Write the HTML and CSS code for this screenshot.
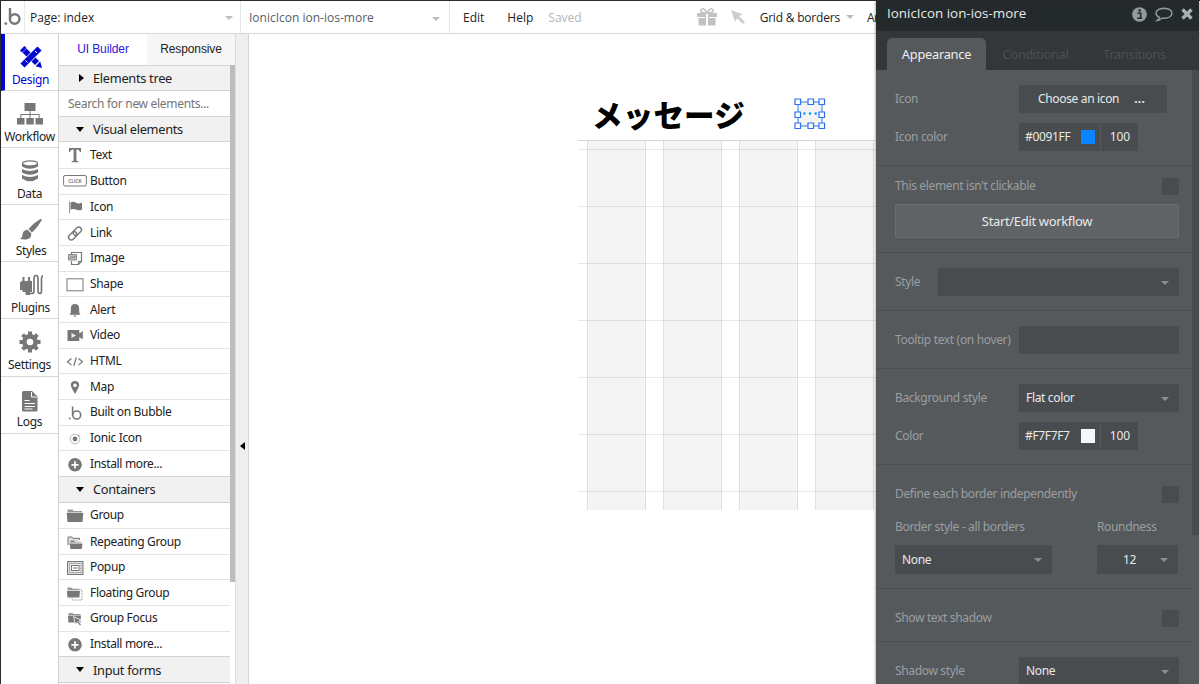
FILE: index.html
```html
<!DOCTYPE html>
<html>
<head>
    <meta charset="utf-8">
    <title>Page: index</title>
    <link rel="stylesheet" href="styles.css">
</head>
<body>
<div class="topbar">
    <div class="logo">
        <svg width="18" height="20" viewBox="0 0 18 20"><circle cx="1.8" cy="16.6" r="1.4" fill="#777"/><path d="M6 1v11" stroke="#777" stroke-width="2.4" fill="none"/><circle cx="10.7" cy="12" r="4.8" stroke="#777" stroke-width="2.4" fill="none"/></svg>
    </div>
    <div class="dropdown page_select">Page: index<i class="caret"></i></div>
    <div class="dropdown element_select">IonicIcon ion-ios-more<i class="caret"></i></div>
    <span class="menu edit">Edit</span>
    <span class="menu help">Help</span>
    <span class="menu saved">Saved</span>
    <svg class="gift" width="20" height="18" viewBox="0 0 20 18"><path d="M0 5h8v4H0zM12 5h8v4h-8zM1.500 10H8v7.500H2.500q-1 0-1-1zM12 10h6.500v6.500q0 1-1 1H12z" fill="#c2c2c2"/><path d="M8 5.500h1v12H8zM11 5.500h1v12h-1z" fill="#c2c2c2"/><path d="M10 5Q3 5 3.800 2.300 5.500-.8 8.500 2.500L10 5l1.500-2.500Q14.500-.8 16.200 2.300 17 5 10 5" fill="none" stroke="#c2c2c2" stroke-width="1.600"/></svg>
    <svg class="arrow" width="14" height="14" viewBox="0 0 14 14"><path d="M0 0l11.500 4.300-3.400 2L14 12 12 14 6.200 8.200 4 11.500z" fill="#ccc"/></svg>
    <span class="menu grid_menu">Grid &amp; borders<i class="caret"></i></span>
    <span class="menu arrange">Ar</span>
</div>

<div class="main">
<div class="nav">
    <div class="nav_item active">
        <svg width="22" height="22" viewBox="0 0 22 22"><path d="M4.500 4.500L17 17" stroke="#0205d3" stroke-width="5.600"/><path d="M22 22l-6.500-1.800 4.700-4.700z" fill="#0205d3"/><path d="M1 5.500L5.500 1" stroke="#0205d3" stroke-width="3"/><path d="M2.500 19.500L19.500 2.500" stroke="#fff" stroke-width="7"/><path d="M2.500 19.500L19.500 2.500" stroke="#0205d3" stroke-width="5.800"/><path d="M5.500 14.500l2 2M15 5l2 2" stroke="#fff" stroke-width="1"/></svg>
        <span>Design</span>
    </div>
    <div class="nav_item">
        <svg width="26" height="22" viewBox="0 0 26 22" fill="#777"><path d="M7.500 0h11v8h-11zM0 15h7.500v6.500H0zM9.300 15h7.500v6.500H9.300zM18.500 15H26v6.500h-7.500z"/><path d="M13 8v7M3.800 15v-3.500h18.400V15" fill="none" stroke="#777"/></svg>
        <span>Workflow</span>
    </div>
    <div class="nav_item">
        <svg width="18" height="22" viewBox="0 0 18 22" fill="#777"><path d="M1 3.500v3Q9 11 17 6.500v-3Q9 8 1 3.500zM1 9v3.500q8 4.500 16 0V9q-8 4-16 0zM1 15v3.500q8 5.500 16 0V15q-8 4-16 0z"/><ellipse cx="9" cy="3.500" rx="7.500" ry="2.600" fill="none" stroke="#777" stroke-width="1.300"/></svg>
        <span>Data</span>
    </div>
    <div class="nav_item styles">
        <svg width="22" height="22" viewBox="0 0 22 22" fill="#777"><path d="M20 1.200q2-.9 1.700 1-3.500 6.500-9.700 12.300L8.500 11Q13.500 5 20 1.200zM7.600 11.700l3.700 3.700q.2 5.300-5.300 6-3.500.4-6-.7 2.300-.7 2.500-4.400.5-4.300 5.100-4.600z"/></svg>
        <span>Styles</span>
    </div>
    <div class="nav_item plugins">
        <svg width="24" height="22" viewBox="0 0 24 22" fill="#777"><path d="M3.500 3h2v4h3.500V3h2v4h2v11h-2v3H6.500v-3H3.500v-2H1V9q0-2 2.500-2z"/><path d="M10.500 19.500h2q2.500 0 2.500-2V4.500Q15 1.500 17 1.500t2 3v12q0 3 1.800 3t1.700-3V4.500Q22.500 2 24 1.500" fill="none" stroke="#777" stroke-width="1.700"/></svg>
        <span>Plugins</span>
    </div>
    <div class="nav_item">
        <svg width="22" height="22" viewBox="0 0 22 22"><circle cx="11" cy="11" r="5.600" fill="none" stroke="#777" stroke-width="4.600"/><path d="M11 .5v4M11 17.500v4M.5 11h4M17.500 11h4M3.600 3.600l2.800 2.800M15.600 15.600l2.800 2.800M18.400 3.600l-2.800 2.800M6.400 15.600l-2.800 2.800" stroke="#777" stroke-width="4"/></svg>
        <span>Settings</span>
    </div>
    <div class="nav_item logs">
        <svg width="18" height="22" viewBox="0 0 18 22"><path d="M2.500 1H11l5.500 5.500V20q0 1.500-1.500 1.500H2.500Q1 21.500 1 20V2.500Q1 1 2.500 1z" fill="#777"/><path d="M10.500 2v5H16M3.500 10.500h5M3.500 13.500H14M3.500 16.500H14M3.500 19h8" fill="none" stroke="#fff" stroke-width="1"/></svg>
        <span>Logs</span>
    </div>
</div>

<div class="palette">
    <div class="tabs">
        <div class="tab current">UI Builder</div>
        <div class="tab">Responsive</div>
    </div>
    <div class="list">
        <div class="section closed"><i></i>Elements tree</div>
        <div class="search">Search for new elements...</div>
        <div class="section"><i></i>Visual elements</div>
        <div class="item"><svg viewBox="0 0 24 18"><path d="M6 2h12v4h-1q-.5-2.500-3-2.500h-.6V14q0 1.300 2 1.300v.9H8.600v-.9q2 0 2-1.300V3.500H10Q7.500 3.500 7 6H6z" fill="#777"/></svg>Text</div>
        <div class="item"><svg viewBox="0 0 24 18"><rect x=".6" y="3.500" width="22.800" height="10.500" rx="1.500" fill="none" stroke="#777"/><text x="12" y="10.800" class="click">CLICK</text></svg>Button</div>
        <div class="item"><svg viewBox="0 0 24 18"><path d="M6.500 3.500v12" stroke="#999"/><path d="M7.500 4.500q3-1.500 5.500.2t6-.3v7q-3.300 1.700-6 .2t-5.500.2z" fill="#777"/></svg>Icon</div>
        <div class="item"><svg viewBox="0 0 24 18"><g transform="rotate(-45 12 9.500)" fill="none" stroke="#777" stroke-width="1.400"><rect x="4" y="6.800" width="9.500" height="5.400" rx="2.700"/><rect x="10.500" y="6.800" width="9.500" height="5.400" rx="2.700"/></g></svg>Link</div>
        <div class="item"><svg viewBox="0 0 24 18"><path d="M8.500 5V3.500h10v9l-3 3h-7V12M15.500 15.500v-3h3" fill="none" stroke="#777" stroke-width="1.200"/><path d="M5.500 5.500h8v5.500h-8z" fill="#bbb" stroke="#888"/><path d="M7 9.500l2-2 1.500 1.500L12 7" stroke="#777" fill="none"/></svg>Image</div>
        <div class="item"><svg viewBox="0 0 24 18"><rect x="4" y="3.800" width="16" height="12" fill="none" stroke="#777" stroke-width="1"/></svg>Shape</div>
        <div class="item"><svg viewBox="0 0 24 18"><path d="M12 3q4.200 0 4.200 5v3.500l1.300 2.300h-11l1.300-2.300V8q0-5 4.200-5zM10.300 14.500h3.400q-1.700 2.600-3.400 0z" fill="#777"/></svg>Alert</div>
        <div class="item"><svg viewBox="0 0 24 18"><path d="M4.500 4h11.800v3.500L19.800 5v8.500l-3.500-2.500v4H4.500z" fill="#777"/><path d="M8.500 7l4.500 2.500L8.500 12z" fill="#eee"/></svg>Video</div>
        <div class="item"><svg viewBox="0 0 24 18"><path d="M8.500 6.500l-4 3.300 4 3.300M15.500 6.500l4 3.300-4 3.300M13.300 5.500l-2.600 8.500" fill="none" stroke="#777" stroke-width="1.200"/></svg>HTML</div>
        <div class="item"><svg viewBox="0 0 24 18"><path d="M12 3q4 0 4.200 4 0 2-4.200 9Q7.800 9 7.800 7 8 3 12 3zm0 2.500a1.800 1.800 0 1 0 .01 0z" fill="#777"/></svg>Map</div>
        <div class="item"><svg viewBox="0 0 24 18"><circle cx="6.800" cy="15.500" r=".9" fill="#777"/><path d="M9.600 3.500v8.500" stroke="#777" stroke-width="1.600"/><circle cx="13.700" cy="12" r="4" fill="none" stroke="#777" stroke-width="1.600"/></svg>Built on Bubble</div>
        <div class="item"><svg viewBox="0 0 24 18"><circle cx="12" cy="10" r="4.800" fill="none" stroke="#aaa" stroke-width=".8"/><circle cx="12" cy="10" r="2.400" fill="#777"/><circle cx="15.700" cy="6.500" r=".8" fill="#777"/></svg>Ionic Icon</div>
        <div class="item"><svg viewBox="0 0 24 18"><circle cx="12" cy="9.800" r="6.800" fill="#777"/><path d="M12 6.200v7.200M8.400 9.800h7.200" stroke="#fff" stroke-width="1.700"/></svg>Install more...</div>
        <div class="section"><i></i>Containers</div>
        <div class="item"><svg viewBox="0 0 24 18"><path d="M4.500 6.500V3.500h5l1 1.500h8.500v1.500z" fill="#999"/><path d="M3.700 7h16.600l-.8 9h-15z" fill="#777"/></svg>Group</div>
        <div class="item"><svg viewBox="0 0 24 18"><path d="M5 12V4h4l1 1.300h6.500V7" fill="#ddd" stroke="#777"/><path d="M7.500 9.500V7.500H11l1 1.200h6v.8z" fill="#888"/><path d="M6.500 10.500h13l-.8 5.500H7.500z" fill="#777"/></svg>Repeating Group</div>
        <div class="item"><svg viewBox="0 0 24 18"><rect x="4.500" y="3.500" width="15.500" height="13" fill="#ddd" stroke="#777"/><rect x="6.500" y="5.500" width="11.500" height="9" fill="#eee" stroke="#888" stroke-dasharray="1 .6"/><rect x="8.500" y="7.500" width="7.500" height="5" fill="#fff" stroke="#777"/><path d="M10 10h4.500" stroke="#777"/></svg>Popup</div>
        <div class="item"><svg viewBox="0 0 24 18"><path d="M4.500 6V3.500h4l1 1.200h7V6z" fill="#999"/><path d="M4 6.800h13l-.6 6.700h-12z" fill="#777"/><path d="M17.500 6h1.500v10H9V14" fill="none" stroke="#999" stroke-dasharray="1.500 1"/></svg>Floating Group</div>
        <div class="item"><svg viewBox="0 0 24 18"><path d="M5.500 6V4h4l1 1h7v1z" fill="#999"/><path d="M5 6.500h13l-.5 7h-12z" fill="#777"/><path d="M10.500 7.500l8 3.700-2.800 1 2.500 3.300-1.400 1.500-2.500-3.500-1.800 2z" fill="#777" stroke="#fff" stroke-width=".8"/></svg>Group Focus</div>
        <div class="item"><svg viewBox="0 0 24 18"><circle cx="12" cy="9.800" r="6.800" fill="#777"/><path d="M12 6.200v7.200M8.400 9.800h7.200" stroke="#fff" stroke-width="1.700"/></svg>Install more...</div>
        <div class="section"><i></i>Input forms</div>
    </div>
</div>

<div class="gutter"><i></i></div>

<div class="canvas">
    <div class="page_head">
        <h1>メッセージ</h1>
        <div class="selection">
            <svg width="32" height="32" viewBox="0 0 32 32"><rect x="4" y="4" width="24" height="24" rx="3" fill="#f4f4f4"/><path d="M4 4h24v24H4z" fill="none" stroke="#2f7cf0"/><g fill="#0091ff"><circle cx="10.300" cy="15.500" r="1.200"/><circle cx="16" cy="15.500" r="1.200"/><circle cx="21.700" cy="15.500" r="1.200"/></g><g fill="#fff" stroke="#2d6df0" stroke-width="1.200"><path d="M1 1h5.500v5.500H1zM14 1h5.500v5.500H14zM25 1h5.500v5.500H25zM1 14h5.500v5.500H1zM25 14h5.500v5.500H25zM1 25h5.500v5.500H1zM14 25h5.500v5.500H14zM25 25h5.500v5.500H25z"/></g></svg>
        </div>
    </div>
    <div class="page_grid">
        <div class="col"></div><div class="col"></div><div class="col"></div><div class="col"></div>
    </div>
</div>

<div class="editor">
    <div class="editor_title">
        <span>IonicIcon ion-ios-more</span>
        <svg width="15" height="15" viewBox="0 0 15 15"><circle cx="7.500" cy="7.500" r="7.300" fill="#949b9e"/><path d="M5.500 6.200h3.200v5M5.200 11.300h5" fill="none" stroke="#24292b" stroke-width="1.600"/><circle cx="7.700" cy="3.500" r="1.300" fill="#24292b"/></svg>
        <svg width="18" height="15" viewBox="0 0 18 15"><path d="M4.500 10.300Q1 9 1 6.200 1.500 1.500 9 1.200q7.500.3 8 5Q16.500 11 9 11.200l-2-.1q-2 2.200-5 2.500 2.200-1.600 2.500-3.300z" fill="none" stroke="#949b9e" stroke-width="1.400"/></svg>
        <svg width="12" height="12" viewBox="0 0 12 12"><path d="M1.500 1.500l9 9M10.500 1.500l-9 9" stroke="#aab0b2" stroke-width="3.400"/></svg>
    </div>
    <div class="editor_tabs">
        <div class="etab on">Appearance</div>
        <div class="etab">Conditional</div>
        <div class="etab">Transitions</div>
    </div>
    <div class="props">
        <div class="group">
            <div class="row"><label>Icon</label><div class="field choose">Choose an icon<b>...</b></div></div>
            <div class="row"><label>Icon color</label><div class="field color">#0091FF<i class="swatch blue"></i></div><div class="field alpha">100</div></div>
        </div>
        <div class="group clickable">
            <div class="check_row"><label>This element isn't clickable</label><i class="check"></i></div>
            <div class="workflow_btn">Start/Edit workflow</div>
        </div>
        <div class="group">
            <div class="row"><label class="short">Style</label><div class="field wide"><i class="caret"></i></div></div>
        </div>
        <div class="group">
            <div class="row"><label>Tooltip text (on hover)</label><div class="field wide"></div></div>
        </div>
        <div class="group">
            <div class="row"><label>Background style</label><div class="field wide">Flat color<i class="caret"></i></div></div>
            <div class="row"><label>Color</label><div class="field color">#F7F7F7<i class="swatch"></i></div><div class="field alpha">100</div></div>
        </div>
        <div class="group borders">
            <div class="check_row"><label>Define each border independently</label><i class="check"></i></div>
            <div class="pair">
                <div class="border_style"><label>Border style - all borders</label><div class="field">None<i class="caret"></i></div></div>
                <div class="roundness"><label>Roundness</label><div class="field">12<i class="caret"></i></div></div>
            </div>
        </div>
        <div class="group text_shadow">
            <div class="check_row"><label>Show text shadow</label><i class="check"></i></div>
        </div>
        <div class="group">
            <div class="row"><label>Shadow style</label><div class="field wide">None<i class="caret"></i></div></div>
        </div>
    </div>
</div>
</div>
</body>
</html>
```
FILE: styles.css
```css
* {
    box-sizing:border-box;
}

body {
    margin:0;
    width:1200px;
    height:684px;
    overflow:hidden;
    border-top:1px solid #2b2a2d;
    border-left:1px solid #2b2a2d;
    background:#fff;
    font-family:"Noto Sans", "Open Sans", sans-serif;
    font-size:12px;
    letter-spacing:-.34px;
    color:#222;
    position:relative;
}

.caret {
    width:0;
    height:0;
    border:4px solid transparent;
    border-top-color:#b4bfc6;
    border-bottom:0;
}

/* top bar */
.topbar {
    display:flex;
    align-items:center;
    height:33px;
    border-bottom:1px solid #d6d6d6;
    font-family:"Open Sans", sans-serif;
    letter-spacing:0;
}

.logo {
    flex:none;
    width:24px;
    height:32px;
    padding:6px 0 0 3px;
    border-right:1px solid #e6e9ea;
}

.dropdown {
    display:flex;
    flex:none;
    align-items:center;
    justify-content:space-between;
    height:32px;
    border-right:1px solid #e0e8e9;
}

.dropdown .caret {
    margin-top:2px;
}

.page_select {
    width:216px;
    padding:0 7px 0 5px;
}

.element_select {
    width:209px;
    padding:1px 9px 0 8px;
    color:#566066;
}

.menu.edit { margin-left:13px; }
.menu.help { margin-left:23px; }
.menu.saved { margin-left:15px; color:#b5b5b5; }
.gift { margin-left:115px; }
.arrow { margin-left:14px; }
.grid_menu {
    display:flex;
    align-items:center;
    margin-left:15px;
    letter-spacing:-.2px;
}
.grid_menu .caret { margin-left:6px; }
.arrange { margin-left:13px; letter-spacing:-.5px; }

.main {
    display:flex;
    height:650px;
}

/* left navigation */
.nav {
    width:58px;
    border-right:1px solid #d0d0d0;
}

.nav_item {
    display:flex;
    flex-direction:column;
    align-items:center;
    height:57.1px;
    padding-top:12px;
    border-bottom:1px solid #d8d8d8;
}

.nav_item span {
    margin-top:3px;
    line-height:17px;
}

.nav_item.styles {
    padding:13px 0 0 3px;
}

.nav_item.styles span {
    margin-top:2px;
}

.nav_item.plugins {
    padding-left:2px;
}

.nav_item.logs {
    padding-top:13px;
}

.nav_item.logs span {
    margin-top:1px;
}

.nav_item.active {
    border-left:4px solid #0205d3;
    padding-right:2px;
    color:#0205d3;
}

/* element palette */
.palette {
    width:176px;
}

.tabs {
    display:flex;
    height:31px;
    font-family:"Liberation Sans", Arial, sans-serif;
    letter-spacing:-.100px;
}

.tab {
    width:88px;
    line-height:31px;
    text-align:center;
    background:#f6f6f6;
}

.tab.current {
    color:#2a20dd;
    background:#fff;
}

.list {
    border-right:5px solid #bdbdbd;
    height:517px;
}

.section, .search {
    display:flex;
    align-items:center;
    height:25.8px;
    border-top:1px solid #d2d2d2;
}

.section {
    padding-left:17px;
    background:#f1f1f1;
    border-bottom:1px solid #d2d2d2;
    height:26.600px;
    font-size:12.800px;
    letter-spacing:-.3px;
}

.section + .item { border-top:0; }

.section i {
    border:4.500px solid transparent;
    border-top:5px solid #000;
    border-bottom:0;
    margin-right:9px;
}

.section.closed i {
    border:4.500px solid transparent;
    border-left:5px solid #000;
    border-right:0;
    margin:0 9px 0 3px;
}

.section.closed {
    height:25px;
    padding-bottom:1px;
    border-bottom:0;
}

.search {
    padding:1px 0 0 9px;
    letter-spacing:-.3px;
    color:#757575;
}

.item {
    display:flex;
    align-items:center;
    height:25.670px;
    padding-left:3.500px;
    padding-bottom:1px;
    border-top:1px solid #e4e4e4;
}

.item svg {
    width:24px;
    height:18px;
    margin:1px 3.500px 0 0;
}

.click {
    font:bold 4.500px Inter, sans-serif;
    letter-spacing:0;
    text-anchor:middle;
    fill:#777;
}

.gutter {
    display:flex;
    align-items:center;
    width:14px;
    background:#efefef;
    border-left:1px solid #ddd;
    border-right:1px solid #d4d4d4;
    padding:174px 0 0 4px;
}

.gutter i {
    border:4.500px solid transparent;
    border-right:5px solid #000;
    border-left:0;
}

/* canvas */
.canvas {
    width:627px;
    padding-left:329px;
    overflow:hidden;
}

.page_head {
    display:flex;
    height:107px;
    border-bottom:1px solid #d4d4d4;
    padding-left:14px;
}

h1 {
    width:153px;
    margin:60px 49px 0 0;
    font:900 30.500px/40px "Noto Sans CJK JP", sans-serif;
    letter-spacing:.2px;
    white-space:nowrap;
    color:#000;
}

.selection {
    margin-top:64px;
}

.page_grid {
    position:relative;
    display:flex;
    gap:17px;
    height:369px;
    padding-left:9px;
}

.page_grid:after {
    content:'';
    position:absolute;
    inset:0;
    background:repeating-linear-gradient(transparent 0 8px, rgba(0,0,0,.09) 8px 9px, transparent 9px 57px);
}

.col {
    flex:0 0 59px;
    background:#f4f4f4;
    border-left:1px solid #e0e0e0;
    border-right:1px solid #e0e0e0;
}

/* property editor */
.editor {
    position:absolute;
    left:875px;
    top:0;
    width:323px;
    height:683px;
    background:#55595c;
    color:#e8e9e9;
    box-shadow:0 0 3px rgba(0,0,0,.5);
}

.editor_title {
    display:flex;
    align-items:center;
    height:30px;
    padding:0 6px 6px 11px;
    background:#24292b;
    font-family:"Open Sans", sans-serif;
    font-size:13.400px;
    letter-spacing:0;
}

.editor_title span {
    flex:1;
}

.editor_title svg {
    margin:2px 0 0 8px;
}

.editor_tabs {
    display:flex;
    height:39px;
    padding:7px 0 0 11px;
    background:#333739;
    font-size:12.800px;
    letter-spacing:-.25px;
}

.etab {
    width:99px;
    line-height:33px;
    text-align:center;
    border-radius:5px 5px 0 0;
    color:#4b5052;
}

.etab.on {
    background:#55595c;
    color:#eee;
}

.props {
    position:relative;
    height:614px;
    overflow:hidden;
}

.props:after {
    content:'';
    position:absolute;
    right:0;
    top:0;
    width:7px;
    height:465px;
    background:#484c4f;
}

.group {
    width:316px;
    padding:14.500px 13px 14px 19px;
    border-bottom:1px solid #4b4f52;
}

label {
    color:#9a9fa2;
}

.row {
    display:flex;
    align-items:center;
    height:28.500px;
}

.row label {
    flex:none;
    width:124px;
    margin-top:-1px;
    white-space:nowrap;
}

.row label.short {
    width:43px;
}

.row + .row {
    margin-top:9.500px;
}

.field {
    display:flex;
    align-items:center;
    justify-content:space-between;
    height:28.500px;
    padding:0 10px 0 7px;
    background:#484c4f;
}

.field .caret {
    border-width:4.500px 4.500px 0;
    border-top-color:#8b8f91;
    margin:2px 0 0 auto;
}

.field.wide {
    flex:1;
}

.field.choose {
    width:148px;
    padding:0 22px 0 19px;
}

.field.choose b {
    letter-spacing:.2px;
}

.field.color {
    width:82px;
    padding:0 5px 0 6px;
    border-right:1px solid #55595c;
}

.field.alpha {
    width:37px;
    justify-content:center;
    padding:0 0 0 1px;
    letter-spacing:-.1px;
}

.swatch {
    width:14px;
    height:14px;
    background:#f7f7f7;
}

.swatch.blue {
    background:#0a84ff;
}

.check_row {
    display:flex;
    justify-content:space-between;
}

.check_row label {
    line-height:15px;
}

.check {
    width:17px;
    height:17px;
    background:#484c4f;
}

.clickable {
    padding-top:12px;
    height:87px;
}

.workflow_btn {
    height:34px;
    margin-top:9px;
    line-height:32px;
    text-align:center;
    font-size:13px;
    background:#5f6366;
    border:1px solid #6a6e71;
    border-radius:2px;
}

.borders {
    height:124px;
    padding-top:21px;
}

.pair {
    display:flex;
    justify-content:space-between;
    margin-top:15px;
}

.pair label {
    display:block;
    line-height:17px;
    margin-bottom:10px;
}

.border_style {
    width:157px;
}

.roundness {
    width:81px;
    margin-right:1px;
}

.roundness .field {
    padding-left:26px;
}

.text_shadow {
    height:53px;
    padding-top:21px;
}
```
